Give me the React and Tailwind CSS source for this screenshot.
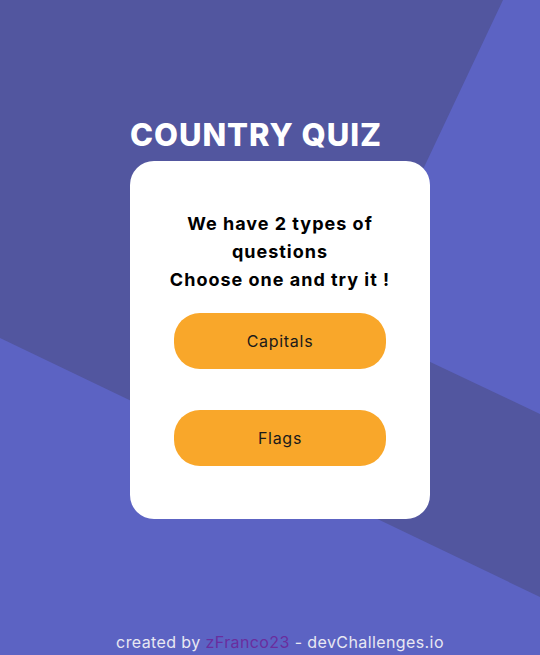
export default function App() {
  const font = { fontFamily: "Inter, 'Noto Sans', sans-serif" };
  return (
    <div className="relative w-[540px] h-[655px] overflow-hidden bg-[#5c63c3]" style={font}>
      <svg className="absolute inset-0" width="540" height="655" viewBox="0 0 540 655">
        <polygon points="0,0 503,0 350,324 540,414 540,597 0,338" fill="#52569f" />
      </svg>
      <div className="relative flex flex-col items-center pl-5 pt-[116px] h-full">
        <div className="w-[300px]">
          <h1 className="text-[31px] leading-[38px] font-extrabold text-white tracking-[0.95px]">COUNTRY QUIZ</h1>
          <div className="mt-[7px] bg-white rounded-[24px] h-[358px] flex flex-col items-center pt-[49px]">
            <p className="text-[18px] leading-[28px] font-bold text-black text-center px-6 tracking-[1px]">
              We have 2 types of questions
              <br />
              Choose one and try it !
            </p>
            <button className="mt-[19px] w-[212px] h-[56px] rounded-[26px] bg-[#f9a72a] text-[16px] text-[#1a1a1a] tracking-[0.7px]">Capitals</button>
            <button className="mt-[41px] w-[212px] h-[56px] rounded-[26px] bg-[#f9a72a] text-[16px] text-[#1a1a1a] tracking-[0.7px]">Flags</button>
          </div>
        </div>
        <p className="mt-auto mb-[1px] text-[16px] leading-[24px] text-[#e8e8f2] tracking-[0.4px]">
          created by <span className="text-[#6a2d9e]">zFranco23</span> - devChallenges.io
        </p>
      </div>
    </div>
  );
}
